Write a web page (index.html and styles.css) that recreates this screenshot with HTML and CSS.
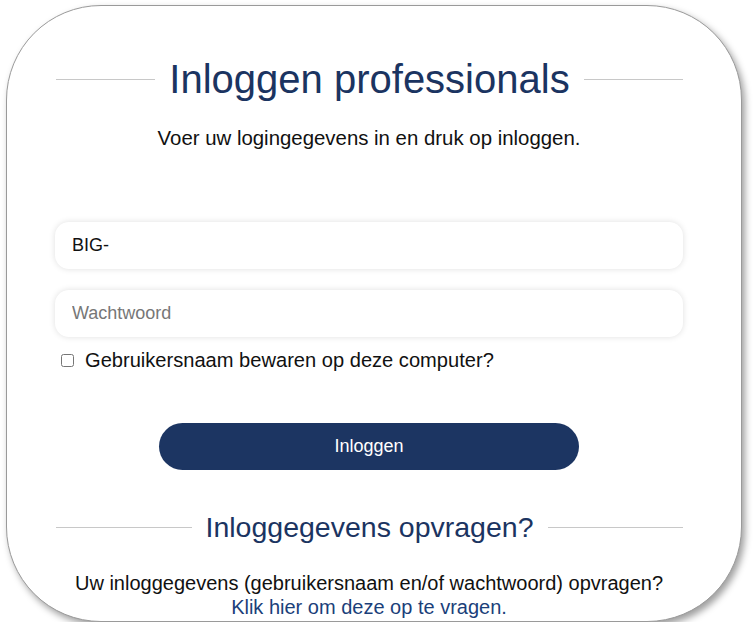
FILE: index.html
```html
<!DOCTYPE html>
<html lang="nl">
<head>
<meta charset="utf-8">
<title>Inloggen professionals</title>
<link rel="stylesheet" href="styles.css">
</head>
<body>
<div class="card">
  <div class="heading-row">
    <span class="rule"></span>
    <h1 class="title">Inloggen professionals</h1>
    <span class="rule"></span>
  </div>
  <p class="intro">Voer uw logingegevens in en druk op inloggen.</p>
  <form class="form">
    <input class="field" type="text" value="BIG-">
    <input class="field field-pw" type="password" placeholder="Wachtwoord">
    <label class="remember"><input class="check" type="checkbox"><span>Gebruikersnaam bewaren op deze computer?</span></label>
    <button class="btn" type="button">Inloggen</button>
  </form>
  <div class="heading-row heading-row-2">
    <span class="rule"></span>
    <h2 class="subtitle">Inloggegevens opvragen?</h2>
    <span class="rule"></span>
  </div>
  <p class="request">Uw inloggegevens (gebruikersnaam en/of wachtwoord) opvragen?<br><a class="link" href="#">Klik hier om deze op te vragen.</a></p>
</div>
</body>
</html>
```
FILE: styles.css
```css
html, body {
  margin: 0;
  padding: 0;
  background: #ffffff;
}
body {
  font-family: "Liberation Sans", Arial, sans-serif;
  color: #111;
}
.card {
  box-sizing: border-box;
  margin: 5px 0 0 6px;
  width: 736px;
  height: 617px;
  border: 1px solid #9a9a9a;
  border-radius: 95px;
  box-shadow: 3px 4px 7px rgba(0, 0, 0, 0.38);
  padding: 50px 58px 0 48px;
  overflow: hidden;
  background: #fff;
}
.heading-row {
  display: flex;
  align-items: center;
  height: 46px;
  padding-left: 1px;
}
.rule {
  flex: 1;
  height: 1px;
  background: #c8c8c8;
}
.title {
  margin: 0 14px;
  font-size: 40px;
  line-height: 46px;
  font-weight: normal;
  color: #1b3461;
  white-space: nowrap;
}
.intro {
  margin: 24px 0 0;
  text-align: center;
  font-size: 20.4px;
  line-height: 24px;
}
.form {
  margin-top: 72px;
  display: flex;
  flex-direction: column;
}
.field {
  box-sizing: border-box;
  height: 47px;
  width: 100%;
  border: none;
  border-radius: 14px;
  box-shadow: 0 0 6px rgba(0, 0, 0, 0.13);
  padding: 0 17px;
  font-family: "Liberation Sans", Arial, sans-serif;
  font-size: 18px;
  color: #111;
  background: #fff;
  outline: none;
}
.field::placeholder {
  color: #777;
}
.field-pw {
  margin-top: 21px;
}
.remember {
  margin-top: 11px;
  display: flex;
  align-items: center;
  height: 24px;
  font-size: 20.1px;
  line-height: 24px;
  padding-left: 2px;
}
.check {
  margin: 0 11px 0 4px;
  width: 13px;
  height: 13px;
}
.btn {
  align-self: center;
  margin-top: 51px;
  width: 420px;
  height: 47px;
  border: none;
  border-radius: 24px;
  background: #1c3562;
  color: #fff;
  font-family: "Liberation Sans", Arial, sans-serif;
  font-size: 18px;
}
.heading-row-2 {
  margin-top: 40px;
  height: 34px;
}
.subtitle {
  margin: 0 14px;
  font-size: 28.5px;
  line-height: 34px;
  font-weight: normal;
  color: #1b3461;
  white-space: nowrap;
}
.request {
  margin: 27px 0 0;
  text-align: center;
  font-size: 20px;
  line-height: 24px;
}
.link {
  color: #1b3f7a;
  text-decoration: none;
}
```
